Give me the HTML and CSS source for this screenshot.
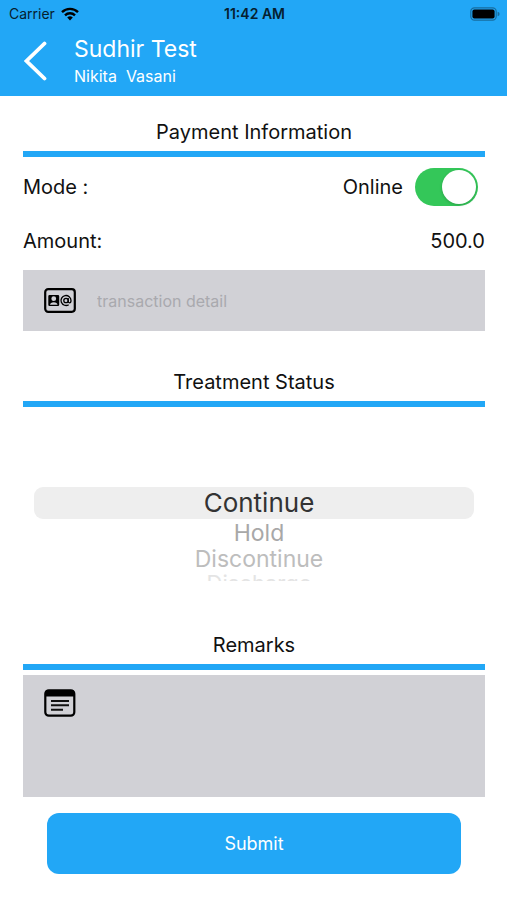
FILE: index.html
```html
<!DOCTYPE html>
<html lang="en">
<head>
<meta charset="utf-8">
<meta name="viewport" content="width=device-width, initial-scale=1">
<title>Payment Information</title>
<link rel="stylesheet" href="styles.css">
</head>
<body>
<header class="header">
  <div class="status">
    <div class="carrier">
      <span>Carrier</span>
      <svg width="18" height="14" viewBox="0 0 18 14" aria-hidden="true">
        <g fill="none" stroke="currentColor" stroke-width="2.4">
          <path d="M1 5.2a11.4 11.4 0 0 1 16 0"/>
          <path d="M4 8.3a7.2 7.2 0 0 1 10 0"/>
        </g>
        <path d="M9 13.4 6.2 10.5a4 4 0 0 1 5.6 0z" fill="currentColor"/>
      </svg>
    </div>
    <time class="clock">11:42 AM</time>
    <svg class="battery" width="30" height="14" viewBox="0 0 30 14" aria-hidden="true">
      <rect x=".8" y=".8" width="25.4" height="12.4" rx="3.6" fill="none" stroke="#176d9f" stroke-width="1.2"/>
      <rect x="2.4" y="2.4" width="22.2" height="9.2" rx="2" fill="#000"/>
      <path d="M27.6 4.8q2 .5 2 2.2t-2 2.2z" fill="#176d9f"/>
    </svg>
  </div>
  <div class="nav">
    <button class="back" type="button" aria-label="Back">
      <svg width="24" height="40" viewBox="0 0 24 40" aria-hidden="true">
        <path d="M20.500 2.500 2.500 20l18 17.500" fill="none" stroke="#fff" stroke-width="3.800" stroke-linecap="round" stroke-linejoin="miter"/>
      </svg>
    </button>
    <div>
      <h1 class="name">Sudhir Test</h1>
      <p class="patient">Nikita&nbsp; Vasani</p>
    </div>
  </div>
</header>
<main>
  <form class="form">
    <h2 class="heading">Payment Information</h2>
    <div class="row">
      <span>Mode :</span>
      <label class="mode">Online <input class="switch" type="checkbox" role="switch" checked></label>
    </div>
    <div class="row">
      <span>Amount:</span>
      <output>500.0</output>
    </div>
    <div class="field">
      <svg width="32" height="25" viewBox="0 0 32 25" aria-hidden="true">
        <rect x="1.200" y="1.200" width="29.600" height="22.600" rx="3" fill="none" stroke="#000" stroke-width="2.200"/>
        <path fill-rule="evenodd" d="M5.500 7h8.500q1.200 0 1.200 1.200v8.600q0 1.200-1.200 1.200H5.500q-1.200 0-1.200-1.200V8.200Q4.300 7 5.500 7zM9.750 8.300a2.400 2.400 0 1 0 0 4.800 2.400 2.400 0 1 0 0-4.800zM6 16.700h7.500q-.3-2.500-3.750-2.500T6 16.700z"/>
        <g fill="none" stroke="#000" stroke-width="1.300">
          <circle cx="22" cy="12.500" r="2.200"/>
          <path d="M24.200 10v3.300q0 1.500 1.300 1.500 1.500 0 1.500-2.300a5 5 0 1 0-2.300 4.200"/>
        </g>
      </svg>
      <input class="detail" type="text" placeholder="transaction detail" aria-label="Transaction detail">
    </div>

    <h2 class="heading heading-spaced">Treatment Status</h2>
    <div class="picker" role="radiogroup" aria-label="Treatment Status">
      <label class="option selected"><input type="radio" name="treatment" checked>Continue</label>
      <label class="option near"><input type="radio" name="treatment">Hold</label>
      <label class="option far"><input type="radio" name="treatment">Discontinue</label>
      <label class="option edge"><input type="radio" name="treatment">Discharge</label>
    </div>

    <h2 class="heading">Remarks</h2>
    <div class="remarks">
      <svg width="32" height="28" viewBox="0 0 32 28" aria-hidden="true">
        <rect x="1.300" y="1.300" width="29" height="25.400" rx="3.500" fill="none" stroke="#000" stroke-width="2.200"/>
        <path d="M1 7.500V4q0-3 3-3h23.600q3 0 3 3v3.500z"/>
        <path d="M7 12h18M7 16.300h18M7 20.700h12" stroke="#111" stroke-width="2"/>
      </svg>
      <textarea class="notes" aria-label="Remarks"></textarea>
    </div>
    <button class="submit" type="submit">Submit</button>
  </form>
</main>
</body>
</html>
```
FILE: styles.css
```css
* {
  box-sizing: border-box;
}

body {
  margin: 0;
  background: #fff;
  color: #111;
  font-family: Inter, "Liberation Sans", sans-serif;
  font-size: 20px;
  line-height: 30px;
}

h1, h2, p {
  margin: 0;
  font-weight: 400;
}

input, textarea, button {
  font: inherit;
}

.header {
  height: 96px;
  background: #22a7f6;
  color: #fff;
}

.status {
  display: grid;
  grid-template-columns: 1fr auto 1fr;
  align-items: center;
  height: 28px;
  padding: 0 7px 0 9px;
  color: #06202f;
  font-size: 14px;
  line-height: 28px;
}

.carrier {
  display: flex;
  align-items: center;
  gap: 6px;
}

.carrier svg {
  color: #000;
}

.clock {
  font-weight: 600;
}

.battery {
  justify-self: end;
}

.nav {
  display: flex;
  align-items: center;
  gap: 26px;
  height: 66px;
  padding-left: 24px;
}

.back {
  display: flex;
  padding: 0;
  border: 0;
  background: none;
}

.name {
  font-size: 23px;
  line-height: 30px;
}

.patient {
  font-size: 16px;
  line-height: 24px;
}

.form {
  display: flex;
  flex-direction: column;
  padding: 20px 22px 24px 23px;
}

.heading {
  padding: 1px 0 4px;
  border-bottom: 6px solid #22a7f6;
  font-size: 20px;
  text-align: center;
}

.heading-spaced {
  margin-top: 35px;
}

.row {
  display: flex;
  align-items: center;
  justify-content: space-between;
  height: 54px;
}

.heading + .row {
  margin-top: 3px;
}

.mode {
  display: flex;
  align-items: center;
  gap: 12px;
  padding-right: 7px;
}

.switch {
  appearance: none;
  display: flex;
  width: 63px;
  height: 38px;
  margin: 0;
  padding: 2px;
  border-radius: 19px;
  background: #c9c9ce;
}

.switch::before {
  content: "";
  width: 34px;
  height: 34px;
  border-radius: 50%;
  background: #fff;
  box-shadow: 0 1px 3px rgb(0 0 0 / 20%);
}

.switch:checked {
  justify-content: flex-end;
  background: #34c759;
}

.field {
  display: flex;
  align-items: center;
  gap: 21px;
  height: 61px;
  margin-top: 2px;
  padding: 0 21px;
  background: #d1d1d6;
}

.detail {
  flex: 1;
  min-width: 0;
  padding: 0;
  border: 0;
  background: none;
  font-size: 16px;
}

.detail::placeholder {
  color: #a9a9ae;
  opacity: 1;
}

.picker {
  display: flex;
  flex-direction: column;
  height: 174px;
  margin: 0 11px 48px;
  padding-top: 80px;
  overflow: hidden;
}

.option {
  flex: none;
  padding-left: 10px;
  text-align: center;
}

.option input {
  appearance: none;
  position: absolute;
  margin: 0;
}

.selected {
  border-radius: 9px;
  background: #eee;
  color: #333;
  font-size: 26px;
  line-height: 32px;
}

.near {
  color: #a8a8a8;
  font-size: 23px;
  line-height: 28px;
}

.far {
  color: #bdbdbd;
  font-size: 23px;
  line-height: 24px;
}

.edge {
  color: #e4e4e4;
  font-size: 22px;
  line-height: 24px;
}

.remarks {
  display: flex;
  gap: 21px;
  height: 122px;
  margin-top: 5px;
  padding: 14px 21px;
  background: #d1d1d6;
}

.notes {
  flex: 1;
  min-width: 0;
  padding: 0;
  border: 0;
  background: none;
  font-size: 16px;
  resize: none;
}

.submit {
  height: 61px;
  margin: 16px 24px 0;
  border: 0;
  border-radius: 12px;
  background: #22a7f6;
  color: #fff;
  font-size: 18px;
}
```
